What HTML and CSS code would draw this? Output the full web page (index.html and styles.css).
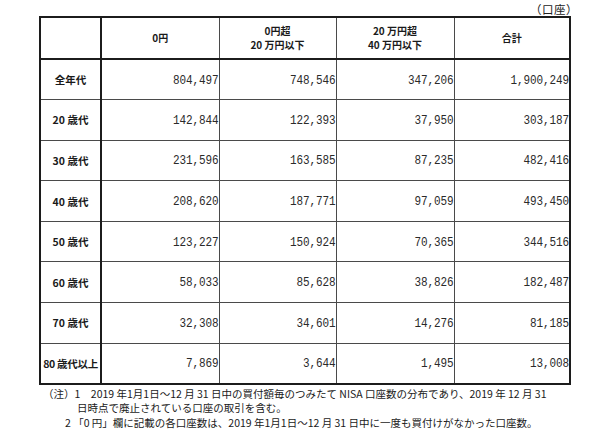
FILE: index.html
```html
<!DOCTYPE html>
<html lang="ja">
<head>
<meta charset="utf-8">
<link rel="stylesheet" href="styles.css">
</head>
<body>
<div class="page">
  <div class="unit">（口座）</div>
  <table class="tbl">
    <colgroup>
      <col class="c1"><col class="c2"><col class="c3"><col class="c4"><col class="c5">
    </colgroup>
    <thead>
      <tr class="head">
        <th class="lab"></th>
        <th>0円</th>
        <th>0円超<br>20 万円以下</th>
        <th>20 万円超<br>40 万円以下</th>
        <th>合計</th>
      </tr>
    </thead>
    <tbody>
      <tr><th class="lab">全年代</th><td><span class="num">804,497</span></td><td><span class="num">748,546</span></td><td><span class="num">347,206</span></td><td><span class="num">1,900,249</span></td></tr>
      <tr><th class="lab">20 歳代</th><td><span class="num">142,844</span></td><td><span class="num">122,393</span></td><td><span class="num">37,950</span></td><td><span class="num">303,187</span></td></tr>
      <tr><th class="lab">30 歳代</th><td><span class="num">231,596</span></td><td><span class="num">163,585</span></td><td><span class="num">87,235</span></td><td><span class="num">482,416</span></td></tr>
      <tr><th class="lab">40 歳代</th><td><span class="num">208,620</span></td><td><span class="num">187,771</span></td><td><span class="num">97,059</span></td><td><span class="num">493,450</span></td></tr>
      <tr><th class="lab">50 歳代</th><td><span class="num">123,227</span></td><td><span class="num">150,924</span></td><td><span class="num">70,365</span></td><td><span class="num">344,516</span></td></tr>
      <tr><th class="lab">60 歳代</th><td><span class="num">58,033</span></td><td><span class="num">85,628</span></td><td><span class="num">38,826</span></td><td><span class="num">182,487</span></td></tr>
      <tr><th class="lab">70 歳代</th><td><span class="num">32,308</span></td><td><span class="num">34,601</span></td><td><span class="num">14,276</span></td><td><span class="num">81,185</span></td></tr>
      <tr><th class="lab lab-long">80 歳代以上</th><td><span class="num">7,869</span></td><td><span class="num">3,644</span></td><td><span class="num">1,495</span></td><td><span class="num">13,008</span></td></tr>
    </tbody>
  </table>
  <div class="notes">
    <p class="n1">（注）1　2019 年1月1日～12 月 31 日中の買付額毎のつみたて NISA 口座数の分布であり、2019 年 12 月 31</p>
    <p class="n1b">日時点で廃止されている口座の取引を含む。</p>
    <p class="n2">2 「0 円」欄に記載の各口座数は、2019 年1月1日～12 月 31 日中に一度も買付けがなかった口座数。</p>
  </div>
</div>
</body>
</html>
```
FILE: styles.css
```css
html, body {
  margin: 0;
  padding: 0;
  background: #fff;
}
body {
  font-family: "Noto Sans CJK JP", sans-serif;
  color: #1a1a1a;
}
.page {
  width: 600px;
  height: 432px;
  padding: 2px 0 0 39px;
  box-sizing: border-box;
}
.unit {
  width: 539px;
  height: 14px;
  text-align: right;
  font-size: 11.5px;
  line-height: 14px;
  letter-spacing: 0.5px;
  color: #222;
}
.tbl {
  border-collapse: collapse;
  table-layout: fixed;
  width: 532px;
  border: 2px solid #1c1c1c;
}
.c1 { width: 61px; }
.c2 { width: 118px; }
.c3 { width: 117px; }
.c4 { width: 118px; }
.c5 { width: 116px; }
.tbl th, .tbl td {
  border: 1px solid #4a4a4a;
  padding: 0;
}
.head th {
  height: 40px;
  font-size: 10px;
  font-weight: 700;
  line-height: 14px;
  text-align: center;
  border-bottom: 2px solid #1c1c1c;
}
.tbl th.lab {
  border-right: 2px solid #1c1c1c;
  font-size: 10.5px;
  font-weight: 700;
  text-align: center;
  white-space: nowrap;
}
.tbl tbody tr {
  height: 40.6px;
}
.tbl td {
  text-align: right;
  font-family: "Liberation Mono", monospace;
  font-size: 11px;
  color: #2a2a2a;
  padding-right: 0;
}
.num {
  display: inline-block;
  letter-spacing: -0.1px;
  transform: scale(1, 1.22);
  transform-origin: right center;
}
.lab-long {
  letter-spacing: -0.3px;
}
.notes {
  font-size: 10.5px;
  line-height: 14.5px;
  color: #1a1a1a;
  margin-top: 2px;
}
.notes p {
  margin: 0;
  white-space: nowrap;
}
.n1 { padding-left: 4px; }
.n1b { padding-left: 38px; }
.n2 { padding-left: 26px; }
```
